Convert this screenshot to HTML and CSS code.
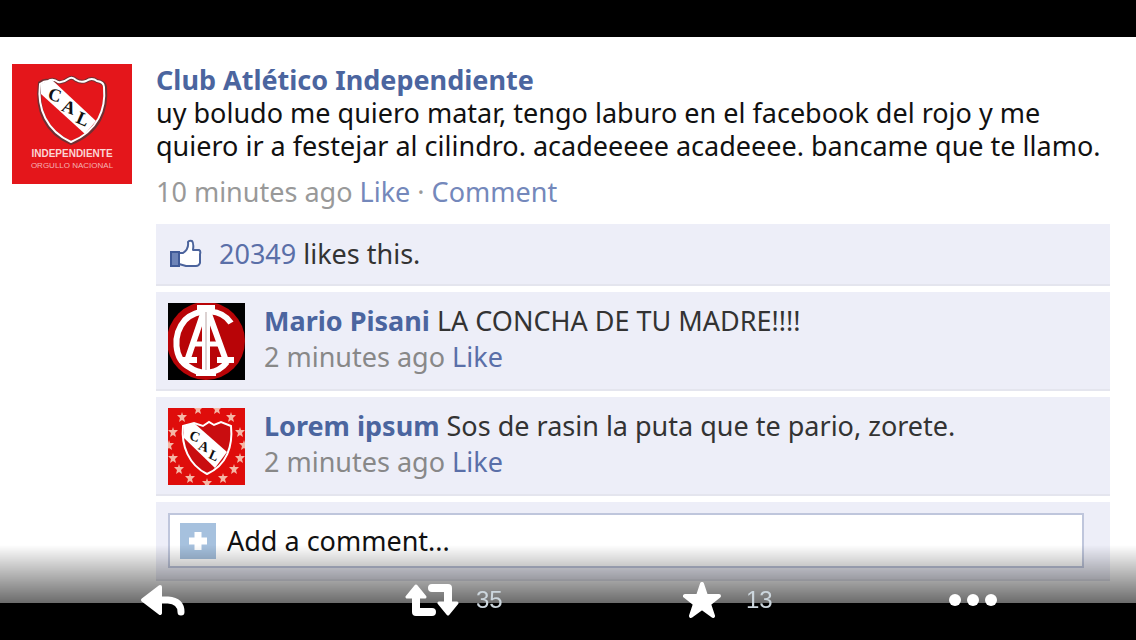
FILE: index.html
```html
<!DOCTYPE html>
<html lang="es">
<head>
    <meta charset="UTF-8">
    <meta name="viewport" content="width=device-width, initial-scale=1.0">
    <title>Club Atlético Independiente</title>
    <link rel="stylesheet" href="styles.css">
</head>
<body>
    <main class="post">
        <svg class="avatar" viewBox="0 0 120 120" role="img" aria-label="Club Atlético Independiente">
            <rect width="120" height="120" fill="#e4161b"/>
            <path d="M28 19 Q32 16 36 17 Q41 14 46 18 Q51 19 56 15 Q60 12 64 16 Q69 19 74 17 Q80 13 85 17 Q92 18 93 23 C95 46 87 68 59 79 C34 68 24 46 28 19Z" fill="#e4161b" stroke="#703033" stroke-width="4"/>
            <path d="M29 20 L39 15 L84 57 L73 70 L29 30Z" fill="#fff"/>
            <path d="M28 20 Q32 17 36 17 Q41 14 46 18 Q51 19 56 15 Q60 12 64 16 Q69 19 74 17 Q80 13 85 17 Q92 18 92 23 C94 45 86 67 59 78 C35 67 25 45 28 20Z" fill="none" stroke="#fff" stroke-width="2"/>
            <g class="crest-letters">
                <text x="43" y="37" transform="rotate(16 43 31)">C</text>
                <text x="57" y="49" transform="rotate(20 57 43)">A</text>
                <text x="71" y="61" transform="rotate(24 71 55)">L</text>
            </g>
            <text class="crest-name" x="60" y="93">INDEPENDIENTE</text>
            <text class="crest-motto" x="60" y="104">ORGULLO NACIONAL</text>
        </svg>

        <div class="content">
            <a class="name" href="#">Club Atlético Independiente</a>
            <p class="message">uy boludo me quiero matar, tengo laburo en el facebook del rojo y me<br>quiero ir a festejar al cilindro. acadeeeee acadeeee. bancame que te llamo.</p>
            <p class="meta">10 minutes ago <a href="#">Like</a> · <a href="#">Comment</a></p>

            <div class="box likes">
                <svg width="34" height="32" viewBox="0 0 34 32">
                    <path d="M11 15 L15 15 Q21 11 20 4 Q21 2 24 3 Q26 5 25 12 L31 12 Q33 13 32 16 L32 25 Q31 28 28 28 L18 28 L11 26Z" fill="#fff" stroke="#4b639c" stroke-width="2" stroke-linejoin="round"/>
                    <rect x="3" y="14" width="8" height="14" fill="#6d84b8" stroke="#3f5a98" stroke-width="2"/>
                </svg>
                <p><a href="#">20349</a> likes this.</p>
            </div>

            <div class="box comment">
                <svg class="thumb" viewBox="0 0 77 77" role="img" aria-label="Mario Pisani">
                    <rect width="77" height="77" fill="#000"/>
                    <circle cx="38" cy="38" r="39" fill="#b80407"/>
                    <g fill="none" stroke="#fff">
                        <path d="M63 20 C54 6 31 4 17 17 C4 32 6 56 21 64 C33 73 50 71 59 59" stroke-width="6"/>
                        <path d="M36 8 L20 55 M40 8 L57 55" stroke-width="6"/>
                        <path d="M38 5 V71" stroke-width="8"/>
                        <path d="M29 5 H47 M28 70 H48 M11 57 H29 M49 57 H66" stroke-width="6"/>
                        <path d="M24 41 H52" stroke-width="5"/>
                    </g>
                    <path d="M38 9 V67" fill="none" stroke="#b9a5a5" stroke-width="1"/>
                </svg>
                <div>
                    <p><a class="author" href="#">Mario Pisani</a> LA CONCHA DE TU MADRE!!!!</p>
                    <p class="time">2 minutes ago <a href="#">Like</a></p>
                </div>
            </div>

            <div class="box comment">
                <svg class="thumb" viewBox="0 0 77 77" role="img" aria-label="Lorem ipsum">
                    <defs>
                        <path id="star" d="M0 -5 L1 -2 L5 -2 L2 1 L3 5 L0 3 L-3 5 L-2 1 L-5 -2 L-1 -2Z"/>
                    </defs>
                    <rect width="77" height="77" fill="#df0d0b"/>
                    <g fill="#f5b7a6">
                        <use href="#star" x="14" y="9"/><use href="#star" x="30" y="1"/><use href="#star" x="49" y="1"/>
                        <use href="#star" x="63" y="9"/><use href="#star" x="5" y="24"/><use href="#star" x="72" y="24"/>
                        <use href="#star" x="1" y="37"/><use href="#star" x="76" y="37"/><use href="#star" x="5" y="50"/>
                        <use href="#star" x="72" y="50"/><use href="#star" x="11" y="61"/><use href="#star" x="66" y="61"/>
                        <use href="#star" x="22" y="70"/><use href="#star" x="55" y="70"/><use href="#star" x="39" y="75"/>
                    </g>
                    <path d="M15 18 L26 14 L37 17 L41 14 L46 17 L53 14 L63 18 C65 38 59 57 39 66 C21 57 13 38 15 18Z" fill="#c90d10"/>
                    <path d="M16 18 L26 15 L59 44 L47 60 L16 30Z" fill="#fff"/>
                    <path d="M15 18 L26 15 L35 18 L41 14 L46 17 L53 14 L63 18 C65 38 59 57 39 66 C21 57 13 38 15 18Z" fill="none" stroke="#fff" stroke-width="2"/>
                    <g class="crest-letters small">
                        <text x="27" y="33" transform="rotate(20 27 28)">C</text>
                        <text x="36" y="43" transform="rotate(20 36 38)">A</text>
                        <text x="46" y="52" transform="rotate(24 46 47)">L</text>
                    </g>
                </svg>
                <div>
                    <p><a class="author" href="#">Lorem ipsum</a> Sos de rasin la puta que te pario, zorete.</p>
                    <p class="time">2 minutes ago <a href="#">Like</a></p>
                </div>
            </div>

            <div class="box add">
                <label class="field">
                    <svg width="36" height="36" viewBox="0 0 36 36">
                        <rect width="36" height="36" fill="#a6c1de"/>
                        <path d="M18 9 V27 M9 18 H27" stroke="#fff" stroke-width="7"/>
                    </svg>
                    <input type="text" placeholder="Add a comment..." aria-label="Add a comment">
                </label>
            </div>
        </div>
    </main>

    <footer class="actions">
        <button type="button" aria-label="Reply">
            <svg width="46" height="32" viewBox="0 0 46 32">
                <path d="M20 3 L3 16 L20 29Z" fill="#fff" stroke="#fff" stroke-width="4" stroke-linejoin="round"/>
                <path d="M18 16 H28 Q41 17 41 28" fill="none" stroke="#fff" stroke-width="7" stroke-linecap="round"/>
            </svg>
        </button>
        <button type="button" aria-label="Retweet">
            <svg width="54" height="32" viewBox="0 0 54 32">
                <path d="M11 2 L2 13 H20Z M43 30 L34 19 H52Z" fill="#fff" stroke="#fff" stroke-width="3" stroke-linejoin="round"/>
                <path d="M11 12 V28 H27 M27 4 H43 V20" fill="none" stroke="#fff" stroke-width="8" stroke-linecap="round" stroke-linejoin="round"/>
            </svg>
            <span>35</span>
        </button>
        <button type="button" aria-label="Favorite">
            <svg width="38" height="38" viewBox="0 0 38 38">
                <path d="M19 3 L23 15 L36 15 L26 23 L30 35 L19 27 L8 35 L12 23 L2 15 L15 15Z" fill="#fff" stroke="#fff" stroke-width="4" stroke-linejoin="round"/>
            </svg>
            <span class="favorites">13</span>
        </button>
        <button type="button" aria-label="More">
            <svg width="48" height="12" viewBox="0 0 48 12" fill="#fff">
                <circle cx="6" cy="6" r="6"/>
                <circle cx="24" cy="6" r="6"/>
                <circle cx="42" cy="6" r="6"/>
            </svg>
        </button>
    </footer>
</body>
</html>
```

FILE: styles.css
```css
* {
    box-sizing: border-box;
}
body {
    margin: 0;
    padding-top: 37px;
    background-color: #000;
    color: #333;
    font-family: "Noto Sans", "Open Sans", sans-serif;
    font-size: 27px;
    line-height: 36px;
}
p {
    margin: 0;
}
a {
    color: #5a6fa8;
    text-decoration: none;
}
svg {
    display: block;
    flex-shrink: 0;
}
.post {
    display: flex;
    gap: 24px;
    padding: 27px 26px 22px 12px;
    background-color: #fff;
}
.avatar {
    width: 120px;
    height: 120px;
}
.crest-letters {
    font: bold 18px "Liberation Serif", serif;
    text-anchor: middle;
    fill: #111;
}
.crest-letters.small {
    font-size: 14px;
}
.crest-name {
    font: bold 10px "Liberation Sans", sans-serif;
    text-anchor: middle;
    fill: #fbd5d5;
}
.crest-motto {
    font: 8px "Liberation Sans", sans-serif;
    text-anchor: middle;
    fill: #f5b3b3;
}
.content {
    flex: 1;
    min-width: 0;
}
.name {
    display: block;
    color: #4b659f;
    font-weight: bold;
    line-height: 32px;
}
.message {
    color: #111;
    line-height: 33px;
    white-space: nowrap;
}
.meta {
    margin: 12px 0 14px;
    color: #999;
}
.meta a {
    color: #7488bb;
}
.box {
    display: flex;
    margin-top: 6px;
    padding: 11px 12px;
    background-color: #edeef8;
    border-bottom: 2px solid #e4e5ee;
}
.likes {
    align-items: center;
    gap: 17px;
    height: 62px;
}
.comment {
    gap: 19px;
    height: 99px;
}
.thumb {
    width: 77px;
    height: 77px;
}
.author {
    color: #4b659f;
    font-weight: bold;
}
.time {
    color: #888;
}
.add {
    padding: 11px 26px 11px 12px;
}
.field {
    display: flex;
    flex: 1;
    align-items: center;
    gap: 11px;
    height: 55px;
    padding: 0 10px;
    background-color: #fff;
    border: 2px solid #bfc6dc;
}
.field input {
    flex: 1;
    min-width: 0;
    padding: 0;
    border: none;
    outline: none;
    background: none;
    font: inherit;
}
.field input::placeholder {
    color: #111;
    opacity: 1;
}
.actions {
    position: fixed;
    left: 0;
    right: 0;
    bottom: 0;
    display: grid;
    grid-template-columns: 265fr 278fr 266fr 48fr;
    align-items: center;
    height: 95px;
    padding: 15px 139px 0 140px;
    background: linear-gradient(rgba(0, 0, 0, 0), rgba(0, 0, 0, 0.95));
}
.actions button {
    display: flex;
    align-items: center;
    gap: 17px;
    padding: 0;
    border: none;
    background: none;
    color: #ccd6dd;
    font: 24px "Liberation Sans", Arial, sans-serif;
    cursor: pointer;
}
.actions .favorites {
    padding-left: 8px;
}
```
